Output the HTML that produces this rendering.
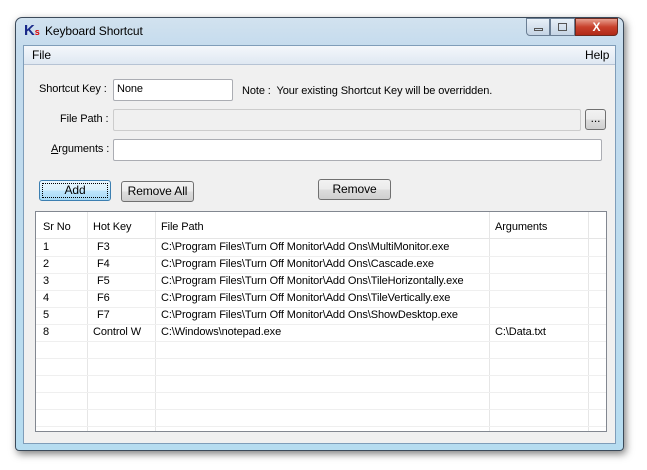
<!DOCTYPE html>
<html><head><meta charset="utf-8"><style>
*{margin:0;padding:0;box-sizing:border-box}
body{width:647px;height:470px;background:#fff;position:relative;overflow:hidden;font-family:"Liberation Sans",Arial,sans-serif;font-size:11px;color:#000;letter-spacing:-0.1px}
.a{position:absolute}
.win{left:15px;top:17px;width:609px;height:434px;border:1px solid #3b4a5a;border-radius:7px 7px 4px 4px;background:linear-gradient(180deg,#d2e2ef 0,#c4dbed 30px,#b6dcf0 100%);box-shadow:2px 3px 8px rgba(0,0,0,.5)}
.client{left:23px;top:45px;width:593px;height:399px;background:#f0f0f0;border:1px solid #7f9db9}
.menu{left:0;top:0;width:591px;height:19px;background:linear-gradient(#f4f7fb,#dfe8f2);border-bottom:1px solid #b6c3d4;font-size:12px}
.tb{background:#fff;border:1px solid #abadb3;border-radius:2px}
.btn{border:1px solid #707070;border-radius:3px;background:linear-gradient(#f2f2f2 0,#ebebeb 50%,#dddddd 51%,#cfcfcf 100%);text-align:center;font-size:12px;line-height:19px}
.grid{left:35px;top:211px;width:572px;height:221px;background:#fff;border:1px solid #828790}
.vl{position:absolute;top:0;width:1px;height:219px;background:#e6e6e6}
.hl{position:absolute;left:0;width:570px;height:1px;background:#efefef}
.t{position:absolute;white-space:nowrap}
</style></head><body>
<div class="a win"></div>
<div class="a" style="left:24px;top:22px;font:bold 15px 'Liberation Sans';color:#1a2a8a">K<span style="font-size:9px;color:#d00">s</span></div>
<div class="a" style="left:45px;top:24px;font-size:12px">Keyboard Shortcut</div>
<div class="a" style="left:526px;top:18px;width:24px;height:18px;border:1px solid #6a7e94;border-radius:0 0 0 4px;background:linear-gradient(#e8f0f8,#c4d4e4)"><div class="a" style="left:7px;top:9px;width:9px;height:3px;border:1px solid #555"></div></div>
<div class="a" style="left:550px;top:18px;width:25px;height:18px;border:1px solid #6a7e94;background:linear-gradient(#e8f0f8,#c4d4e4)"><div class="a" style="left:7px;top:4px;width:9px;height:8px;border:1px solid #555"></div></div>
<div class="a" style="left:575px;top:18px;width:43px;height:18px;border:1px solid #6b2a20;border-radius:0 0 4px 0;background:linear-gradient(#e8a090,#c8402c 50%,#b02a18);color:#fff;font:bold 12px 'Liberation Sans';text-align:center;line-height:16px">X</div>
<div class="a client">
 <div class="a menu"><span class="t" style="left:8px;top:2px">File</span><span class="t" style="left:561px;top:2px">Help</span></div>
</div>
<div class="t" style="left:39px;top:83px">Shortcut Key :</div>
<div class="a tb" style="left:113px;top:79px;width:120px;height:22px"><span class="t" style="left:3px;top:3px">None</span></div>
<div class="t" style="left:242px;top:85px">Note :&nbsp; Your existing Shortcut Key will be overridden.</div>
<div class="t" style="left:60px;top:113px">File Path :</div>
<div class="a tb" style="left:113px;top:109px;width:468px;height:22px;background:#f0f0f0;border-color:#ccc"></div>
<div class="a btn" style="left:585px;top:109px;width:21px;height:21px;line-height:16px">...</div>
<div class="t" style="left:51px;top:143px"><u>A</u>rguments :</div>
<div class="a tb" style="left:113px;top:139px;width:489px;height:22px"></div>
<div class="a btn" style="left:39px;top:180px;width:72px;height:21px;border-color:#3c7fb1;background:linear-gradient(#eaf6fd,#d9f0fc 50%,#bee6fd 51%,#a7d9f5);outline:1px dotted #000;outline-offset:-4px">Add</div>
<div class="a btn" style="left:121px;top:181px;width:73px;height:21px">Remove All</div>
<div class="a btn" style="left:318px;top:179px;width:73px;height:21px">Remove</div>
<div class="a grid">
 <div class="a" style="left:0;top:0;width:570px;height:27px;background:#fff;border-bottom:1px solid #e5e5e5"></div>
 <div class="vl" style="left:51px"></div><div class="vl" style="left:119px"></div><div class="vl" style="left:453px"></div><div class="vl" style="left:552px"></div>
 <div class="hl" style="top:44px"></div><div class="hl" style="top:61px"></div><div class="hl" style="top:78px"></div><div class="hl" style="top:95px"></div><div class="hl" style="top:112px"></div><div class="hl" style="top:129px"></div><div class="hl" style="top:146px"></div><div class="hl" style="top:163px"></div><div class="hl" style="top:180px"></div><div class="hl" style="top:197px"></div><div class="hl" style="top:214px"></div>
 <span class="t" style="left:7px;top:9px">Sr No</span><span class="t" style="left:57px;top:9px">Hot Key</span><span class="t" style="left:125px;top:9px">File Path</span><span class="t" style="left:459px;top:9px">Arguments</span>
 <span class="t" style="left:7px;top:29px">1</span><span class="t" style="left:61px;top:29px">F3</span><span class="t" style="left:125px;top:29px">C:\Program Files\Turn Off Monitor\Add Ons\MultiMonitor.exe</span>
 <span class="t" style="left:7px;top:46px">2</span><span class="t" style="left:61px;top:46px">F4</span><span class="t" style="left:125px;top:46px">C:\Program Files\Turn Off Monitor\Add Ons\Cascade.exe</span>
 <span class="t" style="left:7px;top:63px">3</span><span class="t" style="left:61px;top:63px">F5</span><span class="t" style="left:125px;top:63px">C:\Program Files\Turn Off Monitor\Add Ons\TileHorizontally.exe</span>
 <span class="t" style="left:7px;top:80px">4</span><span class="t" style="left:61px;top:80px">F6</span><span class="t" style="left:125px;top:80px">C:\Program Files\Turn Off Monitor\Add Ons\TileVertically.exe</span>
 <span class="t" style="left:7px;top:97px">5</span><span class="t" style="left:61px;top:97px">F7</span><span class="t" style="left:125px;top:97px">C:\Program Files\Turn Off Monitor\Add Ons\ShowDesktop.exe</span>
 <span class="t" style="left:7px;top:114px">8</span><span class="t" style="left:57px;top:114px">Control W</span><span class="t" style="left:125px;top:114px">C:\Windows\notepad.exe</span><span class="t" style="left:459px;top:114px">C:\Data.txt</span>
</div>
</body></html>
